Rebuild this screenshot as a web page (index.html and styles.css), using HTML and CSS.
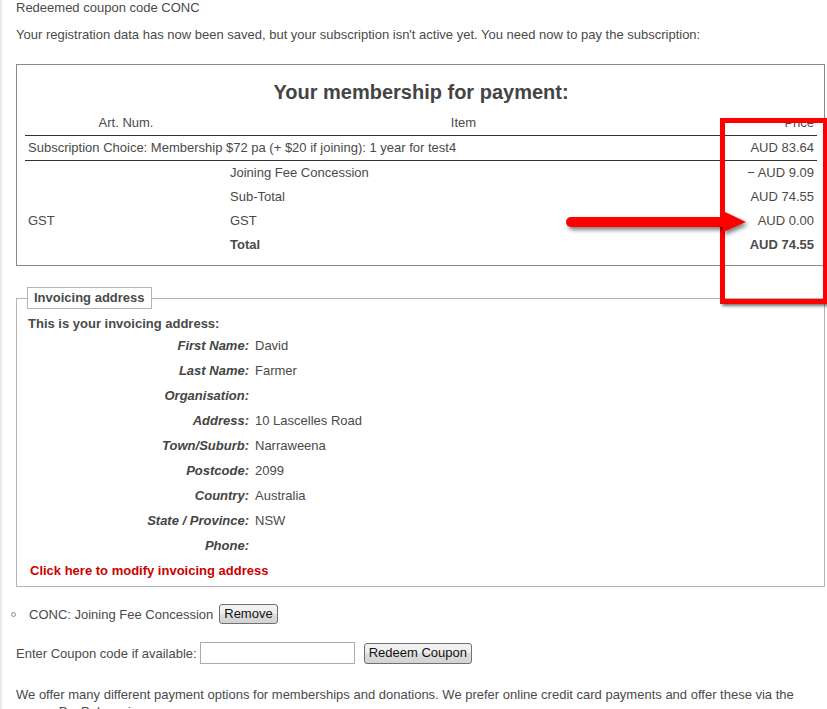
FILE: index.html
```html
<!DOCTYPE html>
<html lang="en">
<head>
<meta charset="utf-8">
<title>Membership payment</title>
<link rel="stylesheet" href="styles.css">
</head>
<body>
<div class="page">
  <p class="msg">Redeemed coupon code CONC</p>
  <p class="msg msg-second">Your registration data has now been saved, but your subscription isn't active yet. You need now to pay the subscription:</p>

  <div class="order-box">
    <h2 class="order-title">Your membership for payment:</h2>
    <table class="order-table">
      <colgroup><col class="c-art"><col class="c-item"><col class="c-price"></colgroup>
      <thead>
        <tr><th class="art">Art. Num.</th><th class="item">Item</th><th class="price">Price</th></tr>
      </thead>
      <tbody>
        <tr class="main-row"><td colspan="2">Subscription Choice: Membership $72 pa (+ $20 if joining): 1 year for test4</td><td class="price">AUD 83.64</td></tr>
        <tr><td></td><td>Joining Fee Concession</td><td class="price">&minus; AUD 9.09</td></tr>
        <tr><td></td><td>Sub-Total</td><td class="price">AUD 74.55</td></tr>
        <tr><td>GST</td><td>GST</td><td class="price">AUD 0.00</td></tr>
        <tr class="total"><td></td><td>Total</td><td class="price">AUD 74.55</td></tr>
      </tbody>
    </table>
  </div>

  <fieldset class="invoice">
    <legend>Invoicing address</legend>
    <p class="intro">This is your invoicing address:</p>
    <dl class="addr">
      <dt>First Name:</dt><dd>David</dd>
      <dt>Last Name:</dt><dd>Farmer</dd>
      <dt>Organisation:</dt><dd></dd>
      <dt>Address:</dt><dd>10 Lascelles Road</dd>
      <dt>Town/Suburb:</dt><dd>Narraweena</dd>
      <dt>Postcode:</dt><dd>2099</dd>
      <dt>Country:</dt><dd>Australia</dd>
      <dt>State / Province:</dt><dd>NSW</dd>
      <dt>Phone:</dt><dd></dd>
    </dl>
    <a class="modify" href="#">Click here to modify invoicing address</a>
  </fieldset>

  <ul class="coupons">
    <li><span class="bullet"></span><span>CONC: Joining Fee Concession</span><button class="btn btn-remove" type="button">Remove</button></li>
  </ul>

  <div class="coupon-form">
    <label class="coupon-label" for="coupon">Enter Coupon code if available:</label>
    <input class="coupon-input" id="coupon" type="text">
    <button class="btn btn-redeem" type="button">Redeem Coupon</button>
  </div>

  <p class="payment-info">We offer many different payment options for memberships and donations. We prefer online credit card payments and offer these via the secure PayPal service.</p>

  <div class="annot-box"></div>
  <svg class="annot-arrow" width="200" height="40" viewBox="0 0 200 40">
    <line x1="14" y1="20" x2="172" y2="20" stroke="#ff0000" stroke-width="10" stroke-linecap="round"/>
    <polygon points="166,9 189,20 166,30" fill="#ff0000"/>
  </svg>
</div>
</body>
</html>
```

FILE: styles.css
```css
html, body {
  margin: 0;
  padding: 0;
  background: #ffffff;
}

body {
  font-family: "Liberation Sans", Arial, sans-serif;
  font-size: 13px;
  color: #4a4a4a;
}

.page {
  position: relative;
  border-left: 2px solid #ebebeb;
  padding: 0 2px 0 14px;
  min-height: 709px;
}

.msg {
  margin: 0;
  line-height: 16px;
}

.msg-second {
  margin-top: 11px;
  margin-bottom: 21px;
}

/* order box */
.order-box {
  border: 1px solid #8a8a8a;
  padding: 15px 7px 8px 8px;
}

.order-title {
  margin: 0 0 7px;
  font-size: 20px;
  line-height: 24px;
  font-weight: bold;
  text-align: center;
  color: #444444;
}

.order-table {
  width: 100%;
  border-collapse: collapse;
  table-layout: fixed;
}

.c-art { width: 202px; }
.c-price { width: 117px; }

.order-table th,
.order-table td {
  padding: 0 3px;
  height: 24px;
  line-height: 24px;
  white-space: nowrap;
  text-align: left;
  font-weight: normal;
}

.order-table th {
  text-align: center;
  border-bottom: 1px solid #333333;
}

.order-table th.price,
.order-table td.price {
  text-align: right;
}

.order-table .main-row td {
  border-bottom: 1px solid #333333;
}

.order-table .total td {
  font-weight: bold;
}

/* invoicing fieldset */
.invoice {
  margin: 21px 0 0;
  padding: 0 11px 3px;
  border: 1px solid #b4b4b4;
  min-width: 0;
}

.invoice legend {
  margin-left: -1px;
  padding: 0 6px;
  border: 1px solid #b4b4b4;
  line-height: 20px;
  font-weight: bold;
  color: #4a4a4a;
}

.intro {
  margin: 6px 0 0;
  line-height: 18px;
  font-weight: bold;
}

.addr {
  display: grid;
  grid-template-columns: 221px 1fr;
  column-gap: 6px;
  margin: 0;
  line-height: 25px;
}

.addr dt {
  text-align: right;
  font-weight: bold;
  font-style: italic;
  color: #444444;
}

.addr dd {
  margin: 0;
  min-height: 25px;
}

.modify {
  display: block;
  padding-left: 2px;
  line-height: 25px;
  font-weight: bold;
  color: #cc0000;
  text-decoration: none;
}

/* coupons */
.coupons {
  list-style: none;
  margin: 17px 0 0 -5px;
  padding: 0;
}

.coupons li {
  display: flex;
  align-items: center;
  height: 20px;
}

.bullet {
  width: 5px;
  height: 5px;
  box-sizing: border-box;
  border: 1px solid #8c8c8c;
  border-radius: 50%;
  margin-right: 13px;
}

.btn {
  font-family: "Liberation Sans", Arial, sans-serif;
  font-size: 13px;
  color: #111111;
  height: 20px;
  padding: 0 4px;
  border: 1px solid #707070;
  border-radius: 3px;
  background: linear-gradient(#f4f4f4, #ececec 50%, #dedede 50%, #d2d2d2);
  line-height: 18px;
}

.btn-remove {
  margin-left: 6px;
}

.coupon-form {
  display: flex;
  align-items: center;
  margin-top: 18px;
  height: 22px;
}

.coupon-input {
  box-sizing: border-box;
  width: 155px;
  height: 22px;
  margin: 0 0 0 3px;
  border: 1px solid #ababab;
  padding: 0 2px;
}

.btn-redeem {
  margin-left: 9px;
  height: 21px;
  padding: 0 4px;
}

.payment-info {
  margin: 22px 0 0;
  line-height: 17px;
}

/* annotation overlay */
.annot-box {
  position: absolute;
  left: 718px;
  top: 118px;
  width: 108px;
  height: 186px;
  box-sizing: border-box;
  border: 5px solid #ff0000;
  box-shadow: 2px 2px 3px rgba(0, 0, 0, 0.55);
}

.annot-arrow {
  position: absolute;
  left: 555px;
  top: 202px;
  filter: drop-shadow(2px 3px 2px rgba(0, 0, 0, 0.5));
}
```
